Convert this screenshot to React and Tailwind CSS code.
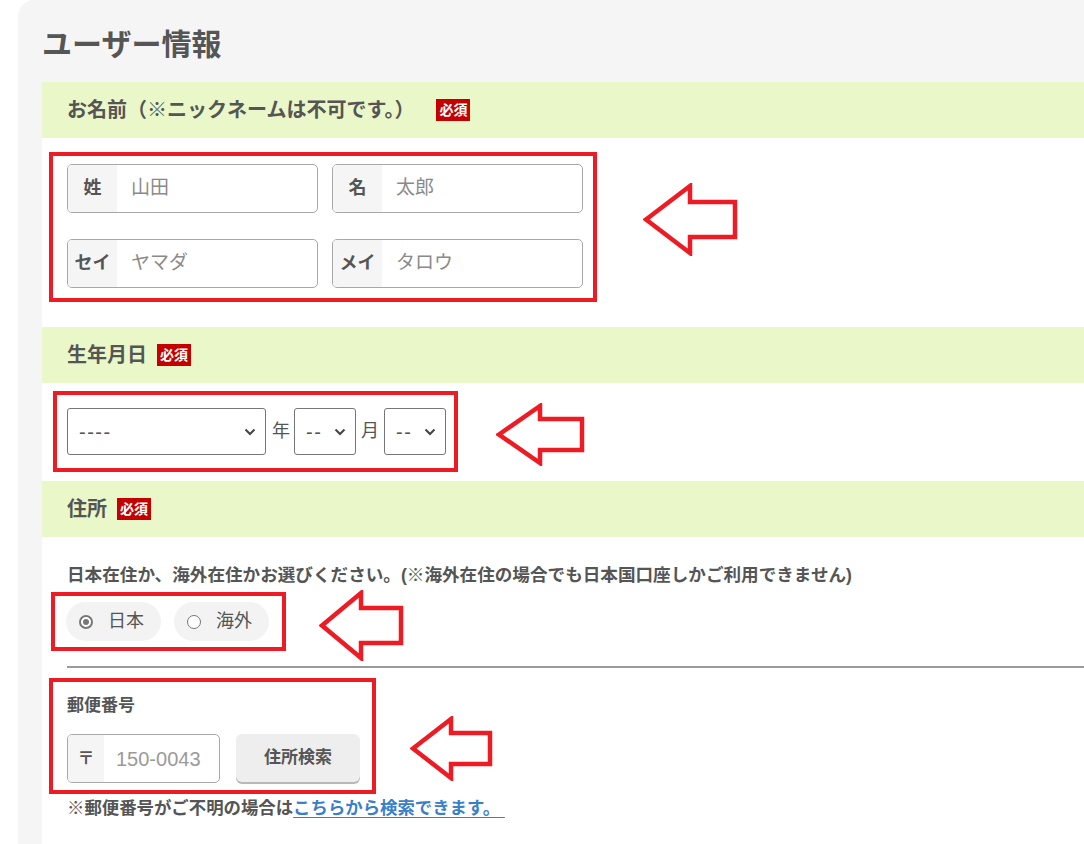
import React from "react";

const FONT = { fontFamily: '"Liberation Sans", "Noto Sans CJK JP", sans-serif' };

function Arrow({ w, h }) {
  const hx = Math.round(w * 0.49);
  const st = Math.round(h * 0.26);
  const sb = h - st;
  const pts = `3,${h / 2} ${hx},3 ${hx},${st} ${w - 3},${st} ${w - 3},${sb} ${hx},${sb} ${hx},${h - 3}`;
  return (
    <svg width={w} height={h} viewBox={`0 0 ${w} ${h}`} className="shrink-0">
      <polygon points={pts} fill="none" stroke="#ed1c24" strokeWidth="4.5" strokeLinejoin="miter" />
    </svg>
  );
}

function Badge() {
  return (
    <span className="inline-flex items-center justify-center bg-[#c40000] text-white text-[14px] font-bold h-[22px] w-[34px]">
      必須
    </span>
  );
}

function SectionHeader({ title, wide }) {
  return (
    <div className="h-[56px] bg-[#eaf7c8] flex items-center pl-[25px]">
      <span className="text-[20px] font-bold text-[#555]">{title}</span>
      <span className={wide ? "ml-[22px] flex" : "ml-[10px] flex"}>
        <Badge />
      </span>
    </div>
  );
}

function NameInput({ label, value }) {
  return (
    <div className="flex h-[49px] border border-[#a8a8a8] rounded-[5px] overflow-hidden bg-white">
      <div className="w-[49px] shrink-0 bg-[#f5f5f5] flex items-center justify-center text-[18px] font-bold text-[#555]">
        {label}
      </div>
      <div className="flex items-center pl-[14px] text-[19px] text-[#8a8a8a]">{value}</div>
    </div>
  );
}

function Chevron() {
  return (
    <svg width="12" height="8" viewBox="0 0 12 8" className="shrink-0">
      <path d="M1.5 1.5 L6 6 L10.5 1.5" fill="none" stroke="#444" strokeWidth="2" />
    </svg>
  );
}

function FakeSelect({ width, text }) {
  return (
    <div
      className={`${width} h-[47px] border border-[#767676] rounded-[3px] bg-white flex items-center justify-between pl-[11px] pr-[9px] text-[20px] text-[#555]`}
    >
      <span className="tracking-[1.5px]">{text}</span>
      <Chevron />
    </div>
  );
}

function Radio({ checked, label }) {
  return (
    <div className="h-[39px] w-[95px] rounded-full bg-[#f3f3f3] flex items-center pl-[13px]">
      {checked ? (
        <span className="w-[14px] h-[14px] rounded-full border-2 border-[#777] flex items-center justify-center bg-white">
          <span className="w-[6px] h-[6px] rounded-full bg-[#777]" />
        </span>
      ) : (
        <span className="w-[14px] h-[14px] rounded-full border-[1.5px] border-[#777] bg-white" />
      )}
      <span className="ml-[15px] text-[18px] text-[#555]">{label}</span>
    </div>
  );
}

export default function App() {
  return (
    <div className="w-[1084px] h-[844px] overflow-hidden bg-white pl-[18px]" style={FONT}>
      <div className="w-[1140px] h-[844px] bg-[#f5f5f5] rounded-tl-[16px] pl-[24px] pt-[25px]">
        <h1 className="text-[30px] font-bold leading-[40px] text-[#555] mb-[17px]">ユーザー情報</h1>

        <div className="bg-white h-[800px]">
          {/* お名前 */}
          <SectionHeader title="お名前（※ニックネームは不可です。）" wide />
          <div className="pt-[14px] pb-[25px] pl-[7px] flex items-start h-[189px]">
            <div className="w-[548px] h-[150px] border-4 border-[#ed1c24] pl-[14px] pt-[8px]">
              <div className="grid grid-cols-[251px_251px] gap-x-[14px] gap-y-[26px]">
                <NameInput label="姓" value="山田" />
                <NameInput label="名" value="太郎" />
                <NameInput label="セイ" value="ヤマダ" />
                <NameInput label="メイ" value="タロウ" />
              </div>
            </div>
            <div className="ml-[46px] mt-[31px]">
              <Arrow w={95} h={73} />
            </div>
          </div>

          {/* 生年月日 */}
          <SectionHeader title="生年月日" />
          <div className="pt-[8px] pb-[9px] pl-[11px] flex items-start h-[98px]">
            <div className="h-[81px] border-4 border-[#ed1c24] pl-[10px] pr-[8px] flex items-center">
              <FakeSelect width="w-[199px]" text="----" />
              <span className="ml-[6px] mr-[4px] text-[18px] text-[#555]">年</span>
              <FakeSelect width="w-[62px]" text="--" />
              <span className="ml-[5px] mr-[5px] text-[18px] text-[#555]">月</span>
              <FakeSelect width="w-[62px]" text="--" />
            </div>
            <div className="ml-[38px] mt-[12px]">
              <Arrow w={89} h={63} />
            </div>
          </div>

          {/* 住所 */}
          <SectionHeader title="住所" />
          <div className="pt-[26px]">
            <p className="pl-[25px] text-[17.6px] leading-[24px] font-bold text-[#555]">
              日本在住か、海外在住かお選びください。(※海外在住の場合でも日本国口座しかご利用できません)
            </p>
            <div className="mt-[5px] pl-[9px] flex items-start h-[59px]">
              <div className="h-[59px] border-4 border-[#ed1c24] pl-[11px] pr-[13px] flex items-center gap-[13px]">
                <Radio checked label="日本" />
                <Radio label="海外" />
              </div>
              <div className="ml-[33px] -mt-[2px]">
                <Arrow w={85} h={71} />
              </div>
            </div>
            <div className="ml-[25px] mt-[15px] h-[2px] bg-[#9a9a9a]" />

            <div className="mt-[10px] pl-[7px] flex items-start h-[116px]">
              <div className="w-[327px] h-[116px] border-4 border-[#ed1c24] pl-[14px] pt-[12px]">
                <div className="text-[17px] leading-[24px] font-bold text-[#555]">郵便番号</div>
                <div className="mt-[16px] flex items-start gap-[16px]">
                  <div className="flex w-[153px] h-[49px] border border-[#a8a8a8] rounded-[5px] overflow-hidden bg-white">
                    <div className="w-[36px] shrink-0 bg-[#f5f5f5] flex items-center justify-center text-[17px] font-bold text-[#555]">
                      〒
                    </div>
                    <div className="flex items-center pl-[12px] text-[20px] text-[#9a9a9a]">150-0043</div>
                  </div>
                  <div className="w-[124px] h-[48px] rounded-[6px] bg-[#eeeeee] shadow-[0_2px_0_#b8b8b8] flex items-center justify-center text-[17px] font-bold text-[#555]">
                    住所検索
                  </div>
                </div>
              </div>
              <div className="ml-[34px] mt-[38px]">
                <Arrow w={83} h={65} />
              </div>
            </div>

            <p className="mt-[2px] pl-[25px] text-[17.4px] leading-[24px] font-bold text-[#555]">
              ※郵便番号がご不明の場合は
              <span className="text-[#3a7fc8] underline underline-offset-[3px]">こちらから検索できます。&nbsp;</span>
            </p>
          </div>
        </div>
      </div>
    </div>
  );
}
